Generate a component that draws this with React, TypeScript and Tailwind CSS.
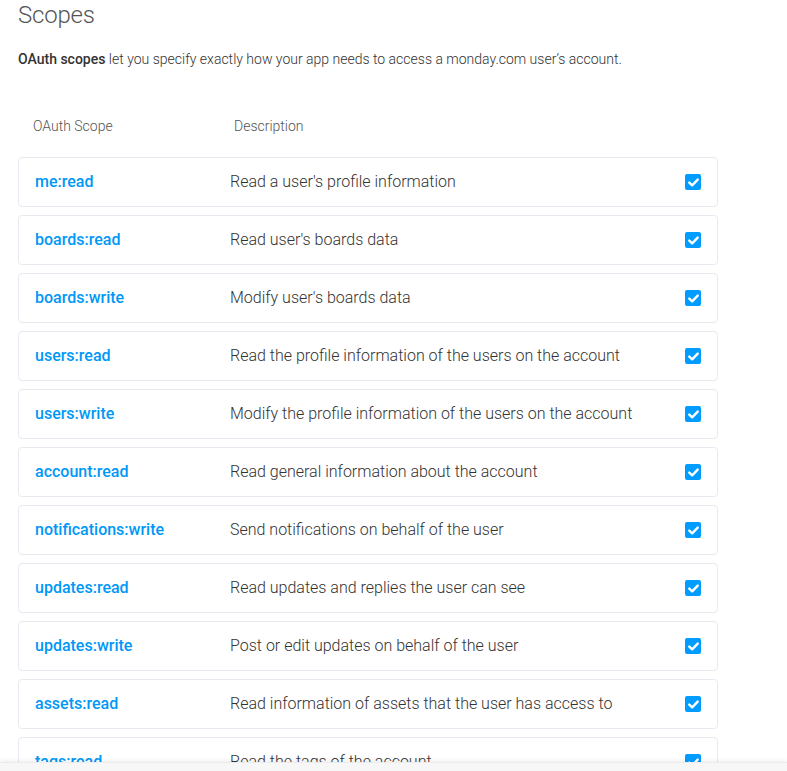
import React from "react";

const scopes: [string, string][] = [
  ["me:read", "Read a user's profile information"],
  ["boards:read", "Read user's boards data"],
  ["boards:write", "Modify user's boards data"],
  ["users:read", "Read the profile information of the users on the account"],
  ["users:write", "Modify the profile information of the users on the account"],
  ["account:read", "Read general information about the account"],
  ["notifications:write", "Send notifications on behalf of the user"],
  ["updates:read", "Read updates and replies the user can see"],
  ["updates:write", "Post or edit updates on behalf of the user"],
  ["assets:read", "Read information of assets that the user has access to"],
  ["tags:read", "Read the tags of the account"],
  ["teams:read", "Read teams data"],
];

function Check() {
  return (
    <div className="w-4 h-4 rounded-[2px] bg-[#009cff] flex items-center justify-center">
      <svg width="11" height="9" viewBox="0 0 11 9">
        <path d="M1.3 4.6 L4.2 7.3 L9.7 1.6" fill="none" stroke="white" strokeWidth="2.4" strokeLinecap="round" strokeLinejoin="round" />
      </svg>
    </div>
  );
}

export default function App() {
  return (
    <div className="min-h-screen bg-white pl-[18px] pb-10" style={{ fontFamily: "Roboto, 'Liberation Sans', sans-serif" }}>
      <h1 className="text-[24px] leading-[28px] font-light text-[#555] tracking-[-0.2px] pt-[1px]">Scopes</h1>
      <p className="mt-[21px] text-[14px] leading-[18px] text-[#333] font-light">
        <span className="font-medium">OAuth scopes</span> let you specify exactly how your app needs to access a monday.com user’s account.
      </p>
      <div className="mt-[49px] flex text-[14px] leading-[18px] font-light text-[#555]">
        <div className="w-[216px] pl-[15px]">OAuth Scope</div>
        <div>Description</div>
      </div>
      <div className="mt-[22px] w-[700px] flex flex-col gap-[8px]">
        {scopes.map(([s, d]) => (
          <div key={s} className="h-[50px] border border-[#e6e9ef] rounded-[4px] flex items-center pl-[16px] pr-[16px]">
            <div className="w-[195px] text-[16px] font-medium text-[#0098f7]">{s}</div>
            <div className="flex-1 text-[16px] font-light text-[#333]">{d}</div>
            <Check />
          </div>
        ))}
      </div>
      <div className="fixed left-0 right-0 bottom-0 h-[9px] bg-[#f7f7f7] shadow-[0_-2px_4px_rgba(0,0,0,0.06)] border-t border-[#ececec]" />
    </div>
  );
}
